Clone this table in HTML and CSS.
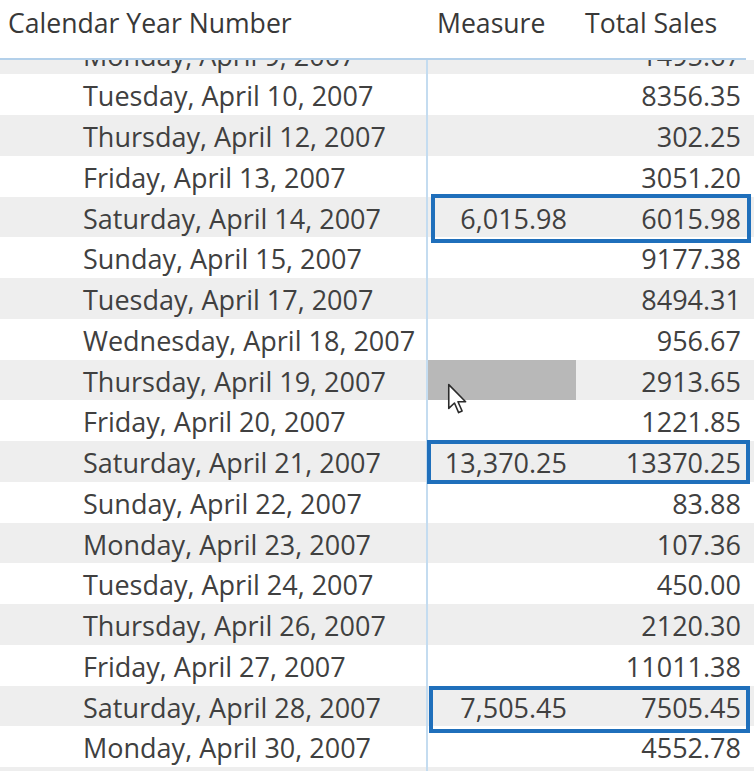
FILE: index.html
```html
<!DOCTYPE html>
<html>
<head>
<meta charset="utf-8">
<link rel="stylesheet" href="styles.css">
</head>
<body>
<div class="table">
  <div class="head">
    <div class="hcell hcell-date">Calendar Year Number</div>
    <div class="hcell hcell-measure">Measure</div>
    <div class="hcell hcell-sales">Total Sales</div>
  </div>
  <div class="body">
    <div class="rows">
      <div class="row alt"><div class="c date">Monday, April 9, 2007</div><div class="c num"></div><div class="c num sales">1495.67</div></div>
      <div class="row"><div class="c date">Tuesday, April 10, 2007</div><div class="c num"></div><div class="c num sales">8356.35</div></div>
      <div class="row alt"><div class="c date">Thursday, April 12, 2007</div><div class="c num"></div><div class="c num sales">302.25</div></div>
      <div class="row"><div class="c date">Friday, April 13, 2007</div><div class="c num"></div><div class="c num sales">3051.20</div></div>
      <div class="row alt"><div class="c date">Saturday, April 14, 2007</div><div class="c num">6,015.98</div><div class="c num sales">6015.98</div><span class="mark mark-1"></span></div>
      <div class="row"><div class="c date">Sunday, April 15, 2007</div><div class="c num"></div><div class="c num sales">9177.38</div></div>
      <div class="row alt"><div class="c date">Tuesday, April 17, 2007</div><div class="c num"></div><div class="c num sales">8494.31</div></div>
      <div class="row"><div class="c date">Wednesday, April 18, 2007</div><div class="c num"></div><div class="c num sales">956.67</div></div>
      <div class="row alt"><div class="c date">Thursday, April 19, 2007</div><div class="c num hover"></div><div class="c num sales">2913.65</div>
        <svg class="cursor" width="21" height="31" viewBox="0 0 13 19.5"><path d="M1 1 L1 16 L4.6 12.6 L7.2 18.6 L9.4 17.6 L6.8 11.8 L11.6 11.8 Z" fill="#fff" stroke="#2b2b2b" stroke-width="1" stroke-linejoin="round"/></svg>
      </div>
      <div class="row"><div class="c date">Friday, April 20, 2007</div><div class="c num"></div><div class="c num sales">1221.85</div></div>
      <div class="row alt"><div class="c date">Saturday, April 21, 2007</div><div class="c num">13,370.25</div><div class="c num sales">13370.25</div><span class="mark mark-2"></span></div>
      <div class="row"><div class="c date">Sunday, April 22, 2007</div><div class="c num"></div><div class="c num sales">83.88</div></div>
      <div class="row alt"><div class="c date">Monday, April 23, 2007</div><div class="c num"></div><div class="c num sales">107.36</div></div>
      <div class="row"><div class="c date">Tuesday, April 24, 2007</div><div class="c num"></div><div class="c num sales">450.00</div></div>
      <div class="row alt"><div class="c date">Thursday, April 26, 2007</div><div class="c num"></div><div class="c num sales">2120.30</div></div>
      <div class="row"><div class="c date">Friday, April 27, 2007</div><div class="c num"></div><div class="c num sales">11011.38</div></div>
      <div class="row alt"><div class="c date">Saturday, April 28, 2007</div><div class="c num">7,505.45</div><div class="c num sales">7505.45</div><span class="mark mark-3"></span></div>
      <div class="row"><div class="c date">Monday, April 30, 2007</div><div class="c num"></div><div class="c num sales">4552.78</div></div>
      <div class="row alt"></div>
    </div>
  </div>
</div>
</body>
</html>
```
FILE: styles.css
```css
html, body {
  margin: 0;
  padding: 0;
  background: #ffffff;
}
body {
  width: 754px;
  height: 771px;
  overflow: hidden;
  font-family: "Open Sans", "Noto Sans", sans-serif;
  color: #404040;
}
.table {
  width: 754px;
  height: 771px;
  display: flex;
  flex-direction: column;
}
.head {
  display: grid;
  grid-template-columns: 428px 149px 177px;
  height: 58px;
  border-bottom: 2px solid #b3d0ea;
  margin-right: 8px;
  box-sizing: content-box;
  flex: none;
}
.hcell {
  font-size: 26.6px;
  line-height: 46px;
  color: #383838;
  white-space: nowrap;
}
.hcell-date { padding-left: 8px; }
.hcell-measure { padding-left: 9px; }
.hcell-sales { padding-left: 8px; }
.body {
  flex: 1;
  overflow: hidden;
  position: relative;
}
.body::before {
  content: "";
  position: absolute;
  left: 426px;
  top: 0;
  bottom: 0;
  width: 2px;
  background: #c4dcf0;
  z-index: 2;
}
.rows {
  margin-top: -26.5px;
}
.row {
  display: grid;
  grid-template-columns: 428px 149px 177px;
  height: 40.75px;
  position: relative;
}
.row.alt { background: #eeeeee; }
.c {
  font-size: 27px;
  line-height: 43px;
  white-space: nowrap;
  overflow: hidden;
}
.date { padding-left: 83px; }
.num {
  text-align: right;
  padding-right: 10px;
}
.num.sales { padding-right: 13px; }
.hover { background: #b8b8b8; margin-right: 1px; }
.mark {
  position: absolute;
  border: 4px solid #1f6fbb;
  box-sizing: border-box;
  z-index: 3;
}
.mark-1 { left: 431px; right: 3px; top: -2.5px; height: 49px; }
.mark-2 { left: 427px; right: 4px; top: -1px; height: 44px; }
.mark-3 { left: 429px; right: 4px; top: 0.5px; height: 47px; }
.cursor {
  position: absolute;
  left: 447px;
  top: 23px;
  z-index: 4;
}
```
